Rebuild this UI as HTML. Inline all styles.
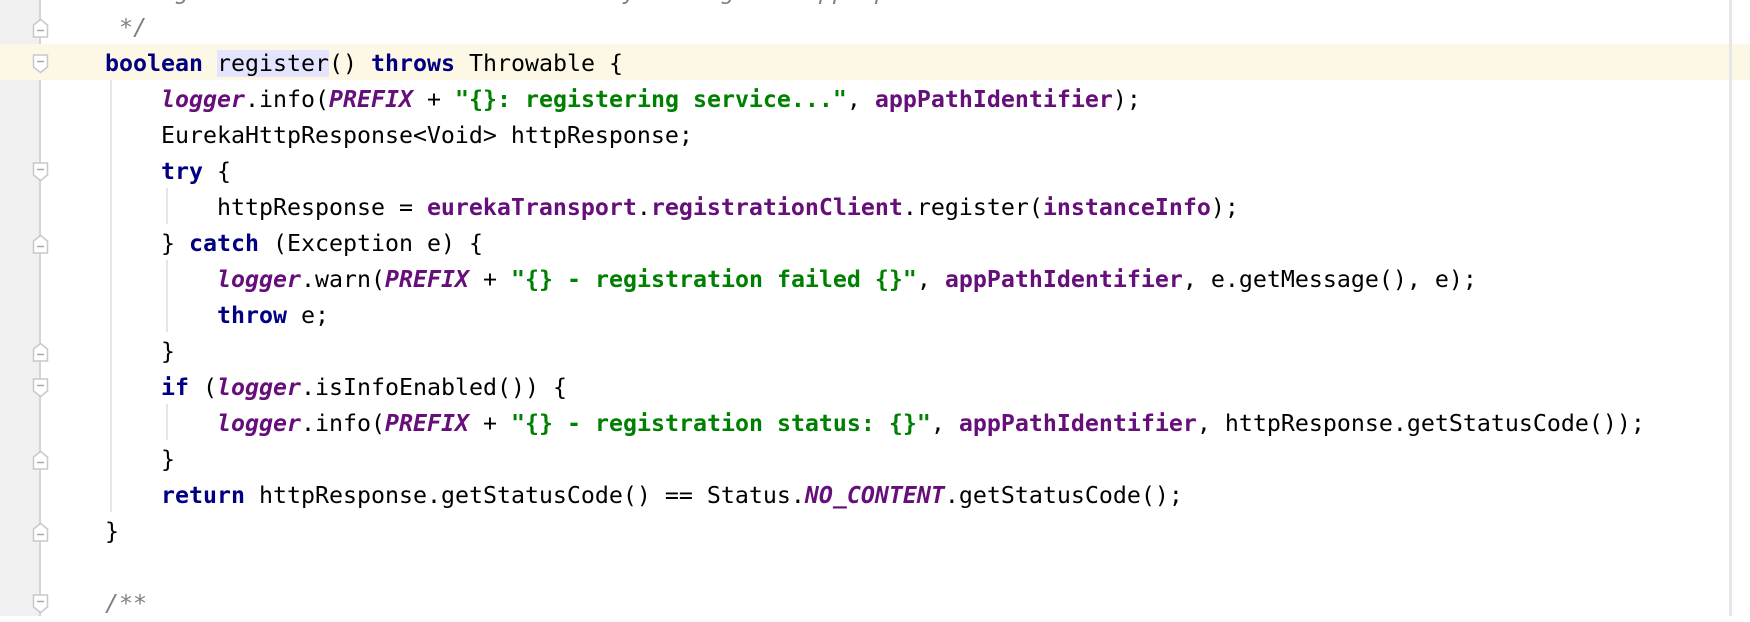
<!DOCTYPE html>
<html><head><meta charset="utf-8"><style>
body{margin:0;width:1750px;height:616px;overflow:hidden;background:#fff;position:relative;font-family:"DejaVu Sans Mono","Liberation Mono",monospace;font-size:23.25px;}
.gut{position:absolute;left:0;top:0;width:40px;height:616px;background:#f0f0f0;}
.fl{position:absolute;left:39px;top:0;width:2px;height:616px;background:#d4d4d4;}
.rl{position:absolute;left:1729px;top:0;width:3px;height:616px;background:#e6e6e6;}
.hl{position:absolute;left:0;top:44px;width:1729px;height:36px;background:#fdf8e5;}
.hl2{position:absolute;left:1732px;top:44px;width:18px;height:36px;background:#fdf8e5;}
.ln{position:absolute;left:49px;height:36px;line-height:36px;padding-top:2px;white-space:pre;color:#000;}
.k{color:#000080;font-weight:bold}
.sf{color:#660e7a;font-weight:bold;font-style:italic}
.f{color:#660e7a;font-weight:bold}
.s{color:#008000;font-weight:bold}
.c{color:#808080;font-style:italic}
.id{background:#e4e4ff}
.g{position:absolute;width:2px;background:#e6e6e6;}
svg.fm{position:absolute;left:32px;}
</style></head><body>
<div class="gut"></div><div class="fl"></div>
<div class="hl"></div><div class="hl2"></div>
<div class="rl"></div>
<div class="g" style="left:110px;top:80px;height:432px"></div>
<div class="g" style="left:166px;top:188px;height:36px"></div>
<div class="g" style="left:166px;top:260px;height:72px"></div>
<div class="g" style="left:166px;top:404px;height:36px"></div>

<div class="ln c" style="top:-28px">     * Register with the eureka service by making the appropriate REST call.</div>
<div class="ln c" style="top:8px">     */</div>
<div class="ln" style="top:44px">    <span class="k">boolean</span> <span class="id">register</span>() <span class="k">throws</span> Throwable {</div>
<div class="ln" style="top:80px">        <span class="sf">logger</span>.info(<span class="sf">PREFIX</span> + <span class="s">"{}: registering service..."</span>, <span class="f">appPathIdentifier</span>);</div>
<div class="ln" style="top:116px">        EurekaHttpResponse&lt;Void&gt; httpResponse;</div>
<div class="ln" style="top:152px">        <span class="k">try</span> {</div>
<div class="ln" style="top:188px">            httpResponse = <span class="f">eurekaTransport</span>.<span class="f">registrationClient</span>.register(<span class="f">instanceInfo</span>);</div>
<div class="ln" style="top:224px">        } <span class="k">catch</span> (Exception e) {</div>
<div class="ln" style="top:260px">            <span class="sf">logger</span>.warn(<span class="sf">PREFIX</span> + <span class="s">"{} - registration failed {}"</span>, <span class="f">appPathIdentifier</span>, e.getMessage(), e);</div>
<div class="ln" style="top:296px">            <span class="k">throw</span> e;</div>
<div class="ln" style="top:332px">        }</div>
<div class="ln" style="top:368px">        <span class="k">if</span> (<span class="sf">logger</span>.isInfoEnabled()) {</div>
<div class="ln" style="top:404px">            <span class="sf">logger</span>.info(<span class="sf">PREFIX</span> + <span class="s">"{} - registration status: {}"</span>, <span class="f">appPathIdentifier</span>, httpResponse.getStatusCode());</div>
<div class="ln" style="top:440px">        }</div>
<div class="ln" style="top:476px">        <span class="k">return</span> httpResponse.getStatusCode() == Status.<span class="sf">NO_CONTENT</span>.getStatusCode();</div>
<div class="ln" style="top:512px">    }</div>
<div class="ln c" style="top:584px">    /**</div>

<svg class="fm" style="top:18px" width="17" height="20"><path d="M1.5 19V7L8.5 1.5L15.5 7V19Z" fill="#fff" stroke="#c8c8c8" stroke-width="1.5"/><path d="M5 12.5H12" stroke="#aaa" stroke-width="1.5"/></svg>
<svg class="fm" style="top:54px" width="17" height="20"><path d="M1.5 1V13L8.5 18.5L15.5 13V1Z" fill="#fff" stroke="#c8c8c8" stroke-width="1.5"/><path d="M5 7.5H12" stroke="#aaa" stroke-width="1.5"/></svg>
<svg class="fm" style="top:162px" width="17" height="20"><path d="M1.5 1V13L8.5 18.5L15.5 13V1Z" fill="#fff" stroke="#c8c8c8" stroke-width="1.5"/><path d="M5 7.5H12" stroke="#aaa" stroke-width="1.5"/></svg>
<svg class="fm" style="top:234px" width="17" height="20"><path d="M1.5 19V7L8.5 1.5L15.5 7V19Z" fill="#fff" stroke="#c8c8c8" stroke-width="1.5"/><path d="M5 12.5H12" stroke="#aaa" stroke-width="1.5"/></svg>
<svg class="fm" style="top:342px" width="17" height="20"><path d="M1.5 19V7L8.5 1.5L15.5 7V19Z" fill="#fff" stroke="#c8c8c8" stroke-width="1.5"/><path d="M5 12.5H12" stroke="#aaa" stroke-width="1.5"/></svg>
<svg class="fm" style="top:378px" width="17" height="20"><path d="M1.5 1V13L8.5 18.5L15.5 13V1Z" fill="#fff" stroke="#c8c8c8" stroke-width="1.5"/><path d="M5 7.5H12" stroke="#aaa" stroke-width="1.5"/></svg>
<svg class="fm" style="top:450px" width="17" height="20"><path d="M1.5 19V7L8.5 1.5L15.5 7V19Z" fill="#fff" stroke="#c8c8c8" stroke-width="1.5"/><path d="M5 12.5H12" stroke="#aaa" stroke-width="1.5"/></svg>
<svg class="fm" style="top:522px" width="17" height="20"><path d="M1.5 19V7L8.5 1.5L15.5 7V19Z" fill="#fff" stroke="#c8c8c8" stroke-width="1.5"/><path d="M5 12.5H12" stroke="#aaa" stroke-width="1.5"/></svg>
<svg class="fm" style="top:594px" width="17" height="20"><path d="M1.5 1V13L8.5 18.5L15.5 13V1Z" fill="#fff" stroke="#c8c8c8" stroke-width="1.5"/><path d="M5 7.5H12" stroke="#aaa" stroke-width="1.5"/></svg>
</body></html>
